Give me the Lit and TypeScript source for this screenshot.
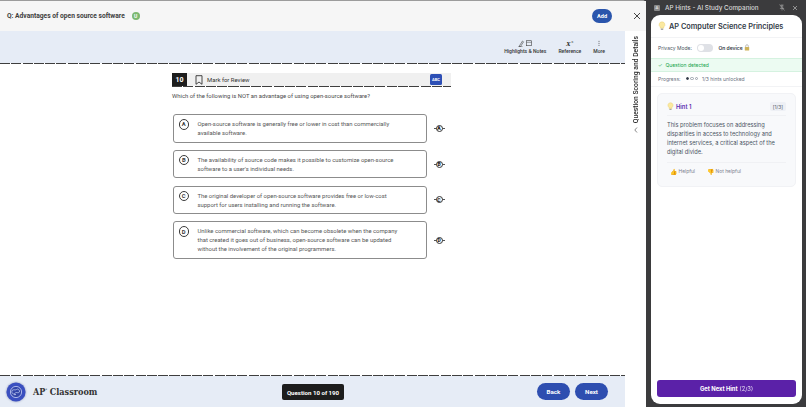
import { LitElement, html, css } from "lit";
import { customElement } from "lit/decorators.js";

const OPTIONS = [
  { k: "A", l: ["Open-source software is generally free or lower in cost than commercially", "available software."], h: 28.5 },
  { k: "B", l: ["The availability of source code makes it possible to customize open-source", "software to a user's individual needs."], h: 28.5 },
  { k: "C", l: ["The original developer of open-source software provides free or low-cost", "support for users installing and running the software."], h: 28.5 },
  { k: "D", l: ["Unlike commercial software, which can become obsolete when the company", "that created it goes out of business, open-source software can be updated", "without the involvement of the original programmers."], h: 37.5 },
];

const bulb = (s: number) => html`<svg width=${s} height=${s} viewBox="0 0 12 12"><path d="M6 1a3.4 3.4 0 0 0-2 6.2V8.6h4V7.2A3.4 3.4 0 0 0 6 1z" fill="#fbe9a0" stroke="#e8cf70" stroke-width=".6"/><rect x="4.5" y="9" width="3" height="1.8" rx=".6" fill="#a9a9a9"/></svg>`;

@customElement("app-root")
export class AppRoot extends LitElement {
  static styles = css`
    :host { display: block; width: 806px; height: 407px; overflow: hidden; font-family: Roboto, "Liberation Sans", sans-serif; background: #3b3b3d; }
    * { box-sizing: border-box; }
    .root { display: flex; width: 806px; height: 407px; }
    .left { width: 646px; height: 407px; background: #fff; border-top: 1px solid #9c9c9c; border-top-right-radius: 4px; display: flex; flex-direction: column; flex: none; }
    .head { height: 30px; background: #f6f6f6; display: flex; align-items: center; padding: 0 0 0 7px; flex: none; }
    .title { font-size: 6.67px; font-weight: 700; color: #3d3d3d; }
    .badge { margin-left: 7px; width: 8px; height: 8px; border-radius: 50%; background: #7cb870; color: #fff; font-size: 5px; font-weight: 700; display: flex; align-items: center; justify-content: center; }
    .add { width: 20px; height: 14px; margin-right: 15px; border-radius: 7px; background: #2a55ac; color: #fff; font-size: 5.6px; font-weight: 700; display: flex; align-items: center; justify-content: center; }
    .x { width: 19px; display: flex; justify-content: center; align-items: center; flex: none; }
    .add-wrap { display: flex; align-items: center; margin-left: auto; }
    .body { flex: 1; display: flex; min-height: 0; }
    .main { width: 625px; display: flex; flex-direction: column; flex: none; }
    .rail { flex: 1; display: flex; flex-direction: column; align-items: center; padding: 5px 0 0 1px; gap: 3px; }
    .vert { writing-mode: vertical-rl; transform: rotate(180deg); font-size: 6.75px; font-weight: 500; color: #2a2a2a; white-space: nowrap; }
    .toolbar { height: 32px; background: #e6ecf6; display: flex; justify-content: flex-end; gap: 12px; padding: 9px 20px 0 0; flex: none; }
    .tool { display: flex; flex-direction: column; align-items: center; font-size: 5.05px; font-weight: 500; color: #333; gap: 1px; }
    .tool svg { display: block; }
    .dash { height: 1px; background: repeating-linear-gradient(90deg, #3e3e3e 0 10px, transparent 10px 11.3px); flex: none; }
    .content { flex: 1; min-height: 0; padding: 9px 0 0 172px; display: flex; flex-direction: column; }
    .qbar { width: 279px; height: 13px; background: #f0f0f0; display: flex; align-items: center; position: relative; flex: none; }
    .num { width: 15px; height: 13px; background: #1d1d1d; color: #fff; font-size: 7px; font-weight: 700; display: flex; align-items: center; justify-content: center; }
    .mark { margin-left: 8px; margin-right: 4px; display: block; }
    .mlabel { font-size: 5.95px; color: #333; }
    .abc { position: absolute; left: 258px; top: 1px; width: 12px; height: 11px; background: #2d4fb5; border-radius: 1.5px; color: #fff; font-size: 4px; font-weight: 700; display: flex; align-items: center; justify-content: center; }
    .qdash { width: 279px; height: 1px; flex: none; }
    .q { font-size: 5.9px; color: #4a4a4a; margin: 5px 0 0 0; line-height: 9px; height: 9px; white-space: nowrap; }
    .opts { display: flex; flex-direction: column; gap: 7.3px; margin-top: 13px; }
    .row { display: flex; align-items: center; }
    .opt { width: 254px; margin-left: 1px; border: 1px solid #8c8c8c; border-radius: 3px; padding: 5px 0 0 4.5px; display: flex; background: #fff; flex: none; }
    .letter { width: 10.5px; height: 10.5px; border: 1px solid #3a3a3a; border-radius: 50%; font-size: 5.8px; font-weight: 700; color: #3a3a3a; display: flex; align-items: center; justify-content: center; flex: none; margin-top: -1px; }
    .otext { margin-left: 8.5px; font-size: 5.9px; line-height: 9px; color: #565656; white-space: nowrap; }
    .elim { margin-left: 6.5px; width: 11px; height: 11px; position: relative; display: flex; align-items: center; justify-content: center; }
    .elim i { position: absolute; left: 0; right: 0; top: 5px; height: 1px; background: #555; }
    .elim b { position: relative; width: 7px; height: 7px; border-radius: 50%; border: .8px solid #333; background: #fff; font-size: 5px; color: #222; display: flex; align-items: center; justify-content: center; font-weight: 900; }
    .foot { height: 31px; background: #e6ecf6; display: flex; align-items: center; padding: 0 17px 0 6px; flex: none; position: relative; }
    .logo { width: 20px; height: 20px; display: block; flex: none; filter: drop-shadow(0 .5px 1px rgba(40,50,120,.45)); }
    .brand { margin-left: 7px; font-family: "DejaVu Serif", "Liberation Serif", serif; font-stretch: condensed; font-weight: 700; font-size: 9px; color: #333; }
    .brand sup { font-size: 3.5px; }
    .count { position: absolute; left: 282px; top: 8px; width: 62px; height: 16px; background: #1d1d1d; color: #fff; border-radius: 2px; font-size: 6.1px; font-weight: 700; display: flex; align-items: center; justify-content: center; }
    .btns { margin-left: auto; display: flex; gap: 5px; }
    .btn { height: 17px; width: 33px; border-radius: 9px; background: #2e4eb0; color: #fff; font-size: 6.2px; font-weight: 700; display: flex; align-items: center; justify-content: center; }
    .panel { flex: 1; display: flex; flex-direction: column; padding: 0 4px 3px 5px; font-family: Inter, "Liberation Sans", sans-serif; }
    .ptitle { height: 15px; display: flex; align-items: center; color: #d9d9d9; font-size: 6.3px; font-weight: 500; flex: none; }
    .pa { width: 6px; height: 6px; background: #8a8a8a; color: #eee; font-size: 4px; border-radius: 1px; display: flex; align-items: center; justify-content: center; margin-right: 5px; margin-left: 3px; }
    .pin { margin-left: auto; margin-right: 7px; display: block; }
    .card { flex: 1; background: #fff; border-radius: 9px; display: flex; flex-direction: column; min-height: 0; }
    .chead { height: 23px; display: flex; align-items: center; padding-left: 6px; gap: 2px; font-size: 7.33px; font-weight: 600; color: #333b47; border-bottom: 1px solid #f2f3f5; flex: none; }
    .privacy { height: 19.5px; display: flex; align-items: center; padding-left: 7px; font-size: 5px; color: #4b5563; flex: none; }
    .toggle { width: 16px; height: 8px; border-radius: 4px; background: #dfe1e6; margin: 0 5px 0 5.5px; position: relative; }
    .toggle::after { content: ""; position: absolute; left: 1px; top: 1px; width: 6px; height: 6px; border-radius: 50%; background: #fff; }
    .ond { font-weight: 600; color: #333b47; }
    .detect { height: 14px; background: #ecfbf2; border-top: 1px solid #d5f2e0; border-bottom: 1px solid #d5f2e0; display: flex; align-items: center; padding-left: 7px; font-size: 5px; color: #16a34a; gap: 3px; flex: none; }
    .prog { height: 15px; display: flex; align-items: center; padding-left: 7px; font-size: 5px; color: #6b7280; border-bottom: 1px solid #f2f3f5; flex: none; }
    .dots { display: flex; gap: 1px; margin: 0 4px 0 5px; }
    .dots i { width: 3.5px; height: 3.5px; border-radius: 50%; border: .6px solid #9aa0aa; }
    .dots i.on { background: #333b47; border-color: #333b47; }
    .hint { margin: 6px 6px 0; height: 94px; background: #f8f9fb; border: 1px solid #f1f2f5; border-radius: 5px; padding: 8px 9px 0; flex: none; }
    .hhead { display: flex; align-items: center; height: 10px; font-size: 5.8px; font-weight: 600; color: #5b2fb0; gap: 1px; margin-left: -1px; }
    .htag { margin-left: auto; font-size: 4.8px; color: #6b7280; background: #eef0f5; padding: 1.5px 3px; border-radius: 2px; font-weight: 500; }
    .htext { font-size: 5.7px; line-height: 9.3px; color: #4b5563; margin-top: 3px; white-space: nowrap; border-top: 1px solid #f0f1f4; padding-top: 4px; }
    .rate { display: flex; gap: 12px; margin-top: 5px; padding: 5px 0 0 3px; border-top: 1px solid #f0f1f4; font-size: 4.9px; color: #7b8290; align-items: center; }
    .rate span { display: flex; align-items: center; gap: 1.5px; }
    .rate em { font-style: normal; font-size: 6px; }
    .spacer { flex: 1; }
    .next { margin: 0 6px 7px; height: 17px; background: #5b21a8; border-radius: 3px; color: #fff; font-size: 5.8px; font-weight: 700; display: flex; align-items: center; justify-content: center; flex: none; gap: 2px; }
    .next span { font-weight: 400; opacity: .85; }
  `;

  render() {
    return html`<div class="root">
      <div class="left">
        <div class="head">
          <span class="title">Q: Advantages of open source software</span>
          <span class="badge">U</span>
          <div class="add-wrap">
            <span class="add">Add</span>
            <span class="x"><svg width="8" height="8" viewBox="0 0 8 8"><path d="M1 1l6 6M7 1L1 7" stroke="#333" stroke-width=".9" fill="none"/></svg></span>
          </div>
        </div>
        <div class="body">
          <div class="main">
            <div class="toolbar">
              <div class="tool"><svg width="16" height="7" viewBox="0 0 16 7"><path d="M2 6.5L5.5 1l1 .8L3.5 6.5zM1.5 6.7h4" stroke="#444" stroke-width=".6" fill="none"/><rect x="9.5" y=".7" width="5" height="5" fill="none" stroke="#444" stroke-width=".6"/><path d="M9.5 2.3h5" stroke="#444" stroke-width=".5"/></svg>Highlights &amp; Notes</div>
              <div class="tool"><svg width="10" height="7" viewBox="0 0 10 7"><text x="1" y="6.2" font-family="Liberation Serif, serif" font-style="italic" font-weight="700" font-size="7" fill="#222">X</text><text x="6.4" y="3" font-family="Liberation Serif, serif" font-size="3.4" fill="#222">n</text></svg>Reference</div>
              <div class="tool"><svg width="6" height="7" viewBox="0 0 6 7"><g fill="#444"><circle cx="3" cy="1.2" r=".5"/><circle cx="3" cy="3.2" r=".5"/><circle cx="3" cy="5.2" r=".5"/></g></svg>More</div>
            </div>
            <div class="dash"></div>
            <div class="content">
              <div class="qbar">
                <span class="num">10</span>
                <svg class="mark" width="8" height="10" viewBox="0 0 8 10"><path d="M1 .7h6v8.6L4 7 1 9.3z" fill="none" stroke="#333" stroke-width=".9"/></svg>
                <span class="mlabel">Mark for Review</span>
                <span class="abc">ABC</span>
              </div>
              <div class="dash qdash"></div>
              <div class="q">Which of the following is NOT an advantage of using open-source software?</div>
              <div class="opts">
                ${OPTIONS.map((o) => html`<div class="row">
                  <div class="opt" style="height:${o.h}px">
                    <span class="letter">${o.k}</span>
                    <div class="otext">${o.l.map((t) => html`<div>${t}</div>`)}</div>
                  </div>
                  <span class="elim"><i></i><b>${o.k}</b></span>
                </div>`)}
              </div>
            </div>
            <div class="dash"></div>
            <div class="foot">
              <svg class="logo" viewBox="0 0 20 20">
                <circle cx="10" cy="10" r="9.6" fill="#3a4fc0"/>
                <circle cx="10" cy="10" r="5.6" fill="#3245a8" stroke="#c9d2f5" stroke-width=".8"/>
                <path d="M6 8.5c2-1.5 3 0 4.5-1s2.5 0 3 1.5-1.5 2-3 1.5-1.5 2-3 1.5S5.5 10 6 8.5z" fill="none" stroke="#c9d2f5" stroke-width=".7"/>
                <circle cx="9" cy="12.5" r=".8" fill="#c9d2f5"/>
              </svg>
              <span class="brand">AP<sup>*</sup> Classroom</span>
              <span class="count">Question 10 of 190</span>
              <div class="btns"><span class="btn">Back</span><span class="btn">Next</span></div>
            </div>
          </div>
          <div class="rail">
            <span class="vert">Question Scoring and Details</span>
            <svg width="6" height="8" viewBox="0 0 6 8"><path d="M4 1.5L1.8 4 4 6.5" stroke="#555" stroke-width=".7" fill="none"/></svg>
          </div>
        </div>
      </div>
      <div class="panel">
        <div class="ptitle">
          <span class="pa">A</span>AP Hints - AI Study Companion
          <svg class="pin" width="6" height="7" viewBox="0 0 6 7"><path d="M1.5 1h3M2.3 1v2.5L1.3 4.5h3.4l-1-1V1M3 4.5V6.5M.5 .5l5 6" stroke="#bbb" stroke-width=".5" fill="none"/></svg>
          <svg style="margin-right:4px;display:block" width="6" height="6" viewBox="0 0 6 6"><path d="M1 1l4 4M5 1L1 5" stroke="#ccc" stroke-width=".6" fill="none"/></svg>
        </div>
        <div class="card">
          <div class="chead">${bulb(10)}<span>AP Computer Science Principles</span></div>
          <div class="privacy">Privacy Mode:<span class="toggle"></span><span class="ond">On device</span>&nbsp;<svg width="6" height="7" viewBox="0 0 6 7"><rect x=".8" y="3" width="4.4" height="3.5" rx=".5" fill="#cdb25a"/><path d="M1.7 3V2a1.3 1.3 0 0 1 2.6 0v1" stroke="#999" stroke-width=".6" fill="none"/></svg></div>
          <div class="detect"><span>✓</span><span>Question detected</span></div>
          <div class="prog">Progress:<span class="dots"><i class="on"></i><i></i><i></i></span>1/3 hints unlocked</div>
          <div class="hint">
            <div class="hhead">${bulb(9)}<span>Hint 1</span><span class="htag">[1/3]</span></div>
            <div class="htext"><div>This problem focuses on addressing</div><div>disparities in access to technology and</div><div>internet services, a critical aspect of the</div><div>digital divide.</div></div>
            <div class="rate"><span><em>👍</em>Helpful</span><span><em>👎</em>Not helpful</span></div>
          </div>
          <div class="spacer"></div>
          <div class="next">Get Next Hint <span>(2/3)</span></div>
        </div>
      </div>
    </div>`;
  }
}
